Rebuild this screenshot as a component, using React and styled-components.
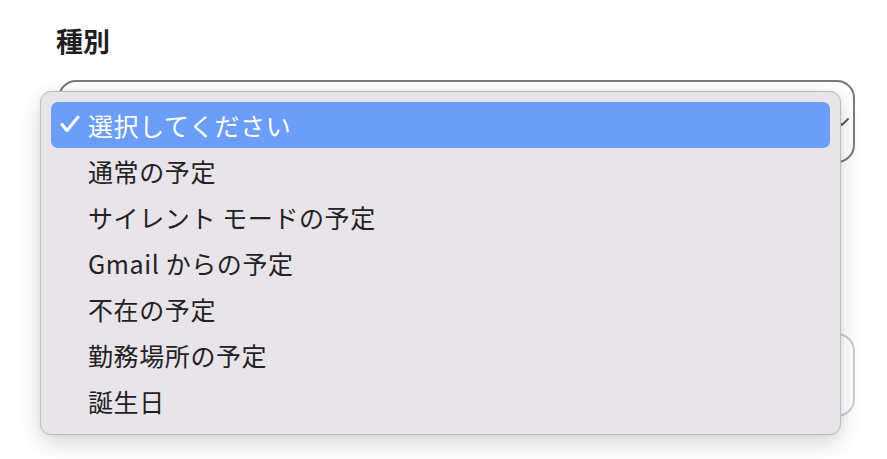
import React from 'react';
import styled, { createGlobalStyle } from 'styled-components';

const options = [
  '選択してください',
  '通常の予定',
  'サイレント モードの予定',
  'Gmail からの予定',
  '不在の予定',
  '勤務場所の予定',
  '誕生日',
];

const Global = createGlobalStyle`
  html, body {
    margin: 0;
    background: #ffffff;
  }
  body {
    font-family: "Noto Sans CJK JP", "Noto Sans", sans-serif;
  }
`;

const Check = () => (
  <svg width="22" height="22" viewBox="0 0 22 22" fill="none">
    <path
      d="M3 11.5l5 6L19 4"
      stroke="#ffffff"
      strokeWidth="3"
      strokeLinecap="round"
      strokeLinejoin="round"
    />
  </svg>
);

const Chevron = () => (
  <svg width="14" height="10" viewBox="0 0 14 10" fill="none">
    <path d="M1 2l6 6 6-6" stroke="#555" strokeWidth="1.8" strokeLinecap="round" />
  </svg>
);

export default function App() {
  return (
    <>
      <Global />
      <Page>
        <Label>種別</Label>
        <Field>
          <SelectBox>
            <Chevron />
          </SelectBox>
          <Menu>
            {options.map((text, i) => (
              <Item key={text} selected={i === 0}>
                <CheckSlot>{i === 0 && <Check />}</CheckSlot>
                {text}
              </Item>
            ))}
          </Menu>
        </Field>
        <SecondBox />
      </Page>
    </>
  );
}

const Page = styled.div`
  width: 887px;
  height: 459px;
  overflow: hidden;
  padding: 22px 32px 0 58px;
  box-sizing: border-box;
  display: flex;
  flex-direction: column;
`;

const Label = styled.div`
  font-size: 27px;
  font-weight: 700;
  color: #1f1f1f;
  line-height: 38px;
  margin-left: -2px;
`;

const Field = styled.div`
  position: relative;
  margin-top: 20px;
`;

const SelectBox = styled.div`
  height: 83px;
  box-sizing: border-box;
  border: 2px solid #7a7a7a;
  border-radius: 18px;
  display: flex;
  align-items: center;
  justify-content: flex-end;
  padding-right: 4px;
`;

const SecondBox = styled.div`
  margin-top: 170px;
  height: 84px;
  box-sizing: border-box;
  border: 2px solid #c9cdd2;
  border-radius: 18px;
`;

const Menu = styled.div`
  position: absolute;
  left: -18px;
  top: 11px;
  width: 801px;
  box-sizing: border-box;
  padding: 10px;
  background: #e8e4ea;
  border: 1px solid #bdbbbf;
  border-radius: 11px;
  box-shadow: 0 8px 22px rgba(0, 0, 0, 0.16), 0 0 4px rgba(0, 0, 0, 0.06);
  display: flex;
  flex-direction: column;
`;

const Item = styled.div`
  height: 46px;
  box-sizing: border-box;
  display: flex;
  align-items: center;
  border-radius: 7px;
  font-size: 25px;
  letter-spacing: 0.6px;
  color: ${(p) => (p.selected ? '#ffffff' : '#222222')};
  background: ${(p) => (p.selected ? '#6a9ef8' : 'transparent')};
`;

const CheckSlot = styled.span`
  width: 37px;
  display: flex;
  justify-content: center;
  margin-top: -2px;
`;
